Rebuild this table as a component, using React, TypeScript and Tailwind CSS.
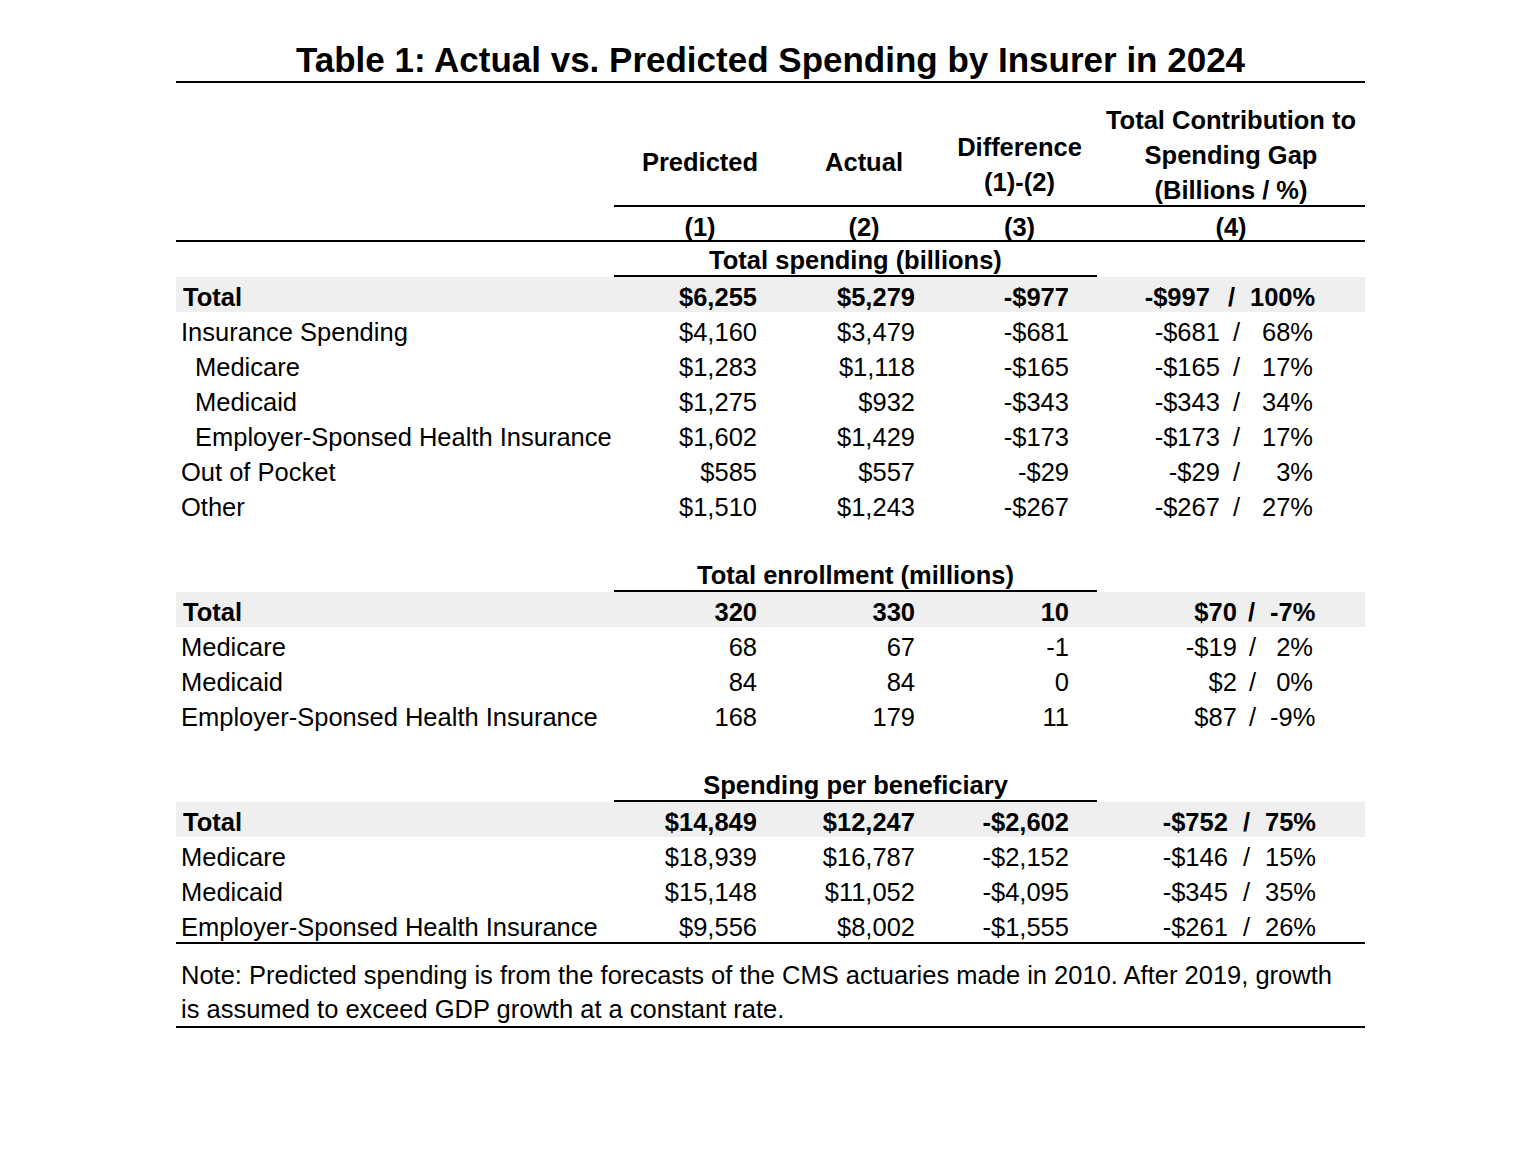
import React from "react";

type Row = {
  label: string;
  indent?: boolean;
  values: [string, string, string];
  amount: string;
  pct: string;
};

type Section = {
  title: string;
  gap: { slash: string; pct: string; boldSlash: string };
  total: Row;
  rows: Row[];
};

const cols = "grid grid-cols-[438px_172px_156px_155px_268px]";

const sections: Section[] = [
  {
    title: "Total spending (billions)",
    gap: { slash: "ml-[13px] mr-[10px]", pct: "w-[63px]", boldSlash: "ml-[18px] mr-[15px]" },
    total: { label: "Total", values: ["$6,255", "$5,279", "-$977"], amount: "-$997", pct: "100%" },
    rows: [
      { label: "Insurance Spending", values: ["$4,160", "$3,479", "-$681"], amount: "-$681", pct: "68%" },
      { label: "Medicare", indent: true, values: ["$1,283", "$1,118", "-$165"], amount: "-$165", pct: "17%" },
      { label: "Medicaid", indent: true, values: ["$1,275", "$932", "-$343"], amount: "-$343", pct: "34%" },
      {
        label: "Employer-Sponsed Health Insurance",
        indent: true,
        values: ["$1,602", "$1,429", "-$173"],
        amount: "-$173",
        pct: "17%",
      },
      { label: "Out of Pocket", values: ["$585", "$557", "-$29"], amount: "-$29", pct: "3%" },
      { label: "Other", values: ["$1,510", "$1,243", "-$267"], amount: "-$267", pct: "27%" },
    ],
  },
  {
    title: "Total enrollment (millions)",
    gap: { slash: "ml-[12px] mr-[14px]", pct: "w-[43px]", boldSlash: "ml-[11px] mr-[15px]" },
    total: { label: "Total", values: ["320", "330", "10"], amount: "$70", pct: "-7%" },
    rows: [
      { label: "Medicare", values: ["68", "67", "-1"], amount: "-$19", pct: "2%" },
      { label: "Medicaid", values: ["84", "84", "0"], amount: "$2", pct: "0%" },
      { label: "Employer-Sponsed Health Insurance", values: ["168", "179", "11"], amount: "$87", pct: "-9%" },
    ],
  },
  {
    title: "Spending per beneficiary",
    gap: { slash: "ml-[15px] mr-[15px]", pct: "w-[48px]", boldSlash: "ml-[15px] mr-[15px]" },
    total: { label: "Total", values: ["$14,849", "$12,247", "-$2,602"], amount: "-$752", pct: "75%" },
    rows: [
      { label: "Medicare", values: ["$18,939", "$16,787", "-$2,152"], amount: "-$146", pct: "15%" },
      { label: "Medicaid", values: ["$15,148", "$11,052", "-$4,095"], amount: "-$345", pct: "35%" },
      {
        label: "Employer-Sponsed Health Insurance",
        values: ["$9,556", "$8,002", "-$1,555"],
        amount: "-$261",
        pct: "26%",
      },
    ],
  },
];

const pads = ["pr-[29px]", "pr-[27px]", "pr-[28px]"];

const DataRow = ({ row, gap, bold }: { row: Row; gap: Section["gap"]; bold?: boolean }) => (
  <div className={`${cols} h-[35px] pt-[5px] leading-[30px] ${bold ? "bg-[#efefef] font-bold" : ""}`}>
    <div className={`whitespace-nowrap ${bold ? "pl-[7px]" : row.indent ? "pl-[19px]" : "pl-[5px]"}`}>
      {row.label}
    </div>
    {row.values.map((v, i) => (
      <div key={i} className={`text-right ${pads[i]}`}>
        {v}
      </div>
    ))}
    <div className="flex justify-end pr-[52px]">
      <span>{row.amount}</span>
      <span className={bold ? gap.boldSlash : gap.slash}>/</span>
      <span className={`text-right ${gap.pct}`}>{row.pct}</span>
    </div>
  </div>
);

export default function App() {
  return (
    <div className="min-h-[1152px] bg-white pl-[176px] pt-[39px] font-['Liberation_Sans',Arial,sans-serif] text-[25.5px] text-black">
      <div className="w-[1189px]">
        <h1 className="border-b-2 border-black text-center text-[35px] font-bold leading-[42px]">
          Table 1: Actual vs. Predicted Spending by Insurer in 2024
        </h1>

        {/* column headings */}
        <div className={`${cols} h-[124px] font-bold leading-[35px]`}>
          <div />
          <div className="col-span-4 grid grid-cols-[172px_156px_155px_268px] border-b-2 border-black">
            <div className="self-end pb-[25px] text-center">Predicted</div>
            <div className="self-end pb-[25px] text-center">Actual</div>
            <div className="self-end pb-[5px] text-center">
              Difference
              <br />
              (1)-(2)
            </div>
            <div className="-mb-[3px] self-end text-center">
              Total Contribution to
              <br />
              Spending Gap
              <br />
              (Billions / %)
            </div>
          </div>
        </div>
        <div className={`${cols} h-[35px] border-b-2 border-black pt-[7px] font-bold leading-[26px]`}>
          <div />
          <div className="text-center">(1)</div>
          <div className="text-center">(2)</div>
          <div className="text-center">(3)</div>
          <div className="text-center">(4)</div>
        </div>

        {sections.map((s, idx) => (
          <div key={s.title} className={idx > 0 ? "pt-[35px]" : ""}>
            <div className={`${cols} h-[35px] font-bold`}>
              <div />
              <div className="col-span-3 border-b-2 border-black pt-[4px] text-center leading-[29px]">
                {s.title}
              </div>
            </div>
            <DataRow row={s.total} gap={s.gap} bold />
            {s.rows.map((r) => (
              <DataRow key={r.label} row={r} gap={s.gap} />
            ))}
          </div>
        ))}

        <div className="border-t-2 border-black" />
        <p className="border-b-2 border-black pl-[5px] pt-[14px] leading-[34px]">
          Note: Predicted spending is from the forecasts of the CMS actuaries made in 2010. After 2019, growth
          <br />
          is assumed to exceed GDP growth at a constant rate.
        </p>
      </div>
    </div>
  );
}
